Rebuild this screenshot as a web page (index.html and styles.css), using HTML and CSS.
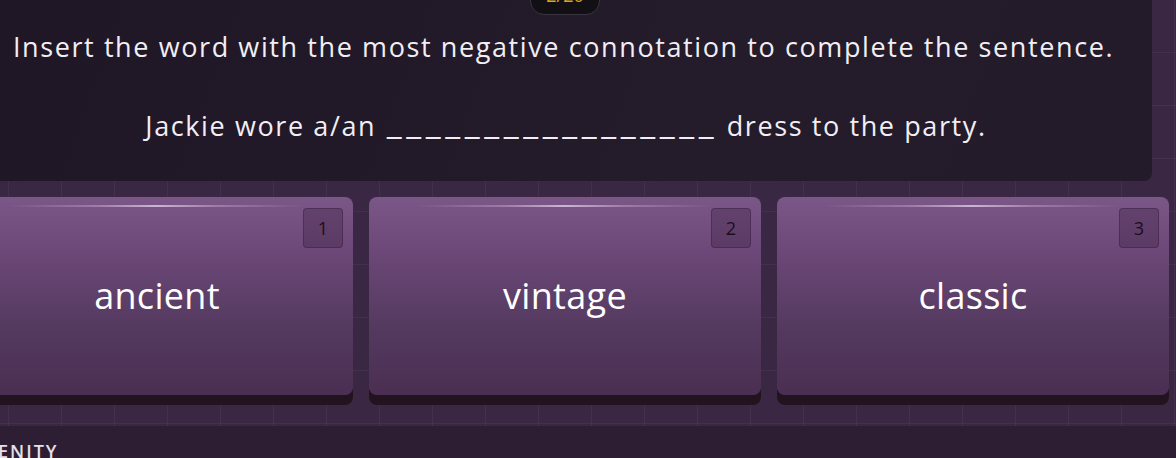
FILE: index.html
```html
<!DOCTYPE html>
<html>
<head>
<meta charset="utf-8">
<link rel="stylesheet" href="styles.css">
</head>
<body>
<div class="stage">
  <div class="counter">2/20</div>
  <section class="question">
    <p class="prompt">Insert the word with the most negative connotation to complete the sentence.</p>
    <p class="sentence">Jackie wore a/an <span class="blank">_________________</span> dress to the party.</p>
  </section>
  <div class="options">
    <button class="option"><span class="shine"></span><span class="key">1</span><span class="word">ancient</span></button>
    <button class="option"><span class="shine"></span><span class="key">2</span><span class="word">vintage</span></button>
    <button class="option"><span class="shine"></span><span class="key">3</span><span class="word">classic</span></button>
  </div>
  <footer class="footer">ENITY</footer>
</div>
</body>
</html>
```
FILE: styles.css
```css
html, body {
  margin: 0;
  padding: 0;
  width: 1176px;
  height: 458px;
  overflow: hidden;
  background: #2d1e33;
  font-family: "Open Sans", "Noto Sans", sans-serif;
}
.stage {
  position: relative;
  height: 458px;
  display: flex;
  flex-direction: column;
}
.stage > * {
  flex-shrink: 0;
}
.stage::before {
  content: "";
  position: absolute;
  left: 0; top: 0; right: 0;
  height: 426px;
  background-color: #3a2744;
  background-image:
    linear-gradient(90deg, rgba(255,255,255,0.045) 1px, transparent 1px),
    linear-gradient(0deg, rgba(255,255,255,0.045) 1px, transparent 1px);
  background-size: 53px 53px;
  background-position: 8px 0;
  z-index: 0;
}
.counter {
  position: absolute;
  left: 530px;
  top: -21px;
  width: 70px;
  height: 36px;
  box-sizing: border-box;
  border: 1px solid #3a3340;
  background: #121014;
  border-radius: 14px;
  color: #d9a821;
  font-size: 18px;
  text-align: center;
  line-height: 30px;
  z-index: 3;
}
.question {
  position: relative;
  z-index: 1;
  width: 1152px;
  height: 181px;
  box-sizing: border-box;
  background: linear-gradient(110deg, #1f1725 0%, #241b2b 60%, #231a2a 100%);
  border-bottom-right-radius: 8px;
  color: #f2eef4;
  display: flex;
  flex-direction: column;
  align-items: center;
  padding-top: 29px;
}
.prompt {
  margin: 0 0 0 -25px;
  font-size: 27px;
  line-height: 36px;
  letter-spacing: 1.6px;
  white-space: nowrap;
}
.sentence {
  margin: 43px 0 0 -20px;
  font-size: 27px;
  line-height: 36px;
  letter-spacing: 1.6px;
  white-space: nowrap;
}
.blank {
  font-size: 34px;
  letter-spacing: 4.6px;
  line-height: 20px;
  vertical-align: 2px;
  margin-left: 2px;
}
.options {
  position: relative;
  z-index: 1;
  display: grid;
  grid-template-columns: repeat(3, 392px);
  gap: 16px;
  margin-top: 16px;
  margin-left: -39px;
}
.option {
  position: relative;
  height: 198px;
  border: none;
  border-radius: 8px;
  padding: 0;
  background: linear-gradient(180deg, #7b5787 0%, #6a4776 30%, #553a60 65%, #4a2f52 100%);
  box-shadow: 0 10px 0 #22131f;
  display: flex;
  align-items: center;
  justify-content: center;
  font-family: "Open Sans", "Noto Sans", sans-serif;
  cursor: pointer;
}
.shine {
  position: absolute;
  left: 48px;
  right: 50px;
  top: 8px;
  height: 2px;
  background: linear-gradient(90deg, rgba(255,255,255,0) 0%, rgba(230,200,235,0.35) 30%, rgba(240,220,245,0.7) 50%, rgba(230,200,235,0.35) 70%, rgba(255,255,255,0) 100%);
}
.key {
  position: absolute;
  top: 11px;
  right: 10px;
  width: 40px;
  height: 40px;
  box-sizing: border-box;
  border: 1px solid rgba(40,20,45,0.35);
  border-radius: 4px;
  background: rgba(60,35,70,0.35);
  color: #1a0e1e;
  font-size: 18px;
  line-height: 38px;
  text-align: center;
}
.word {
  color: #ffffff;
  font-size: 36px;
  line-height: 44px;
  margin-top: 0;
  letter-spacing: 0.3px;
}
.footer {
  position: relative;
  z-index: 1;
  margin-top: 46px;
  color: #e6e0ea;
  font-size: 18px;
  font-weight: 600;
  letter-spacing: 2px;
  line-height: 20px;
  margin-left: -2px;
}
```
